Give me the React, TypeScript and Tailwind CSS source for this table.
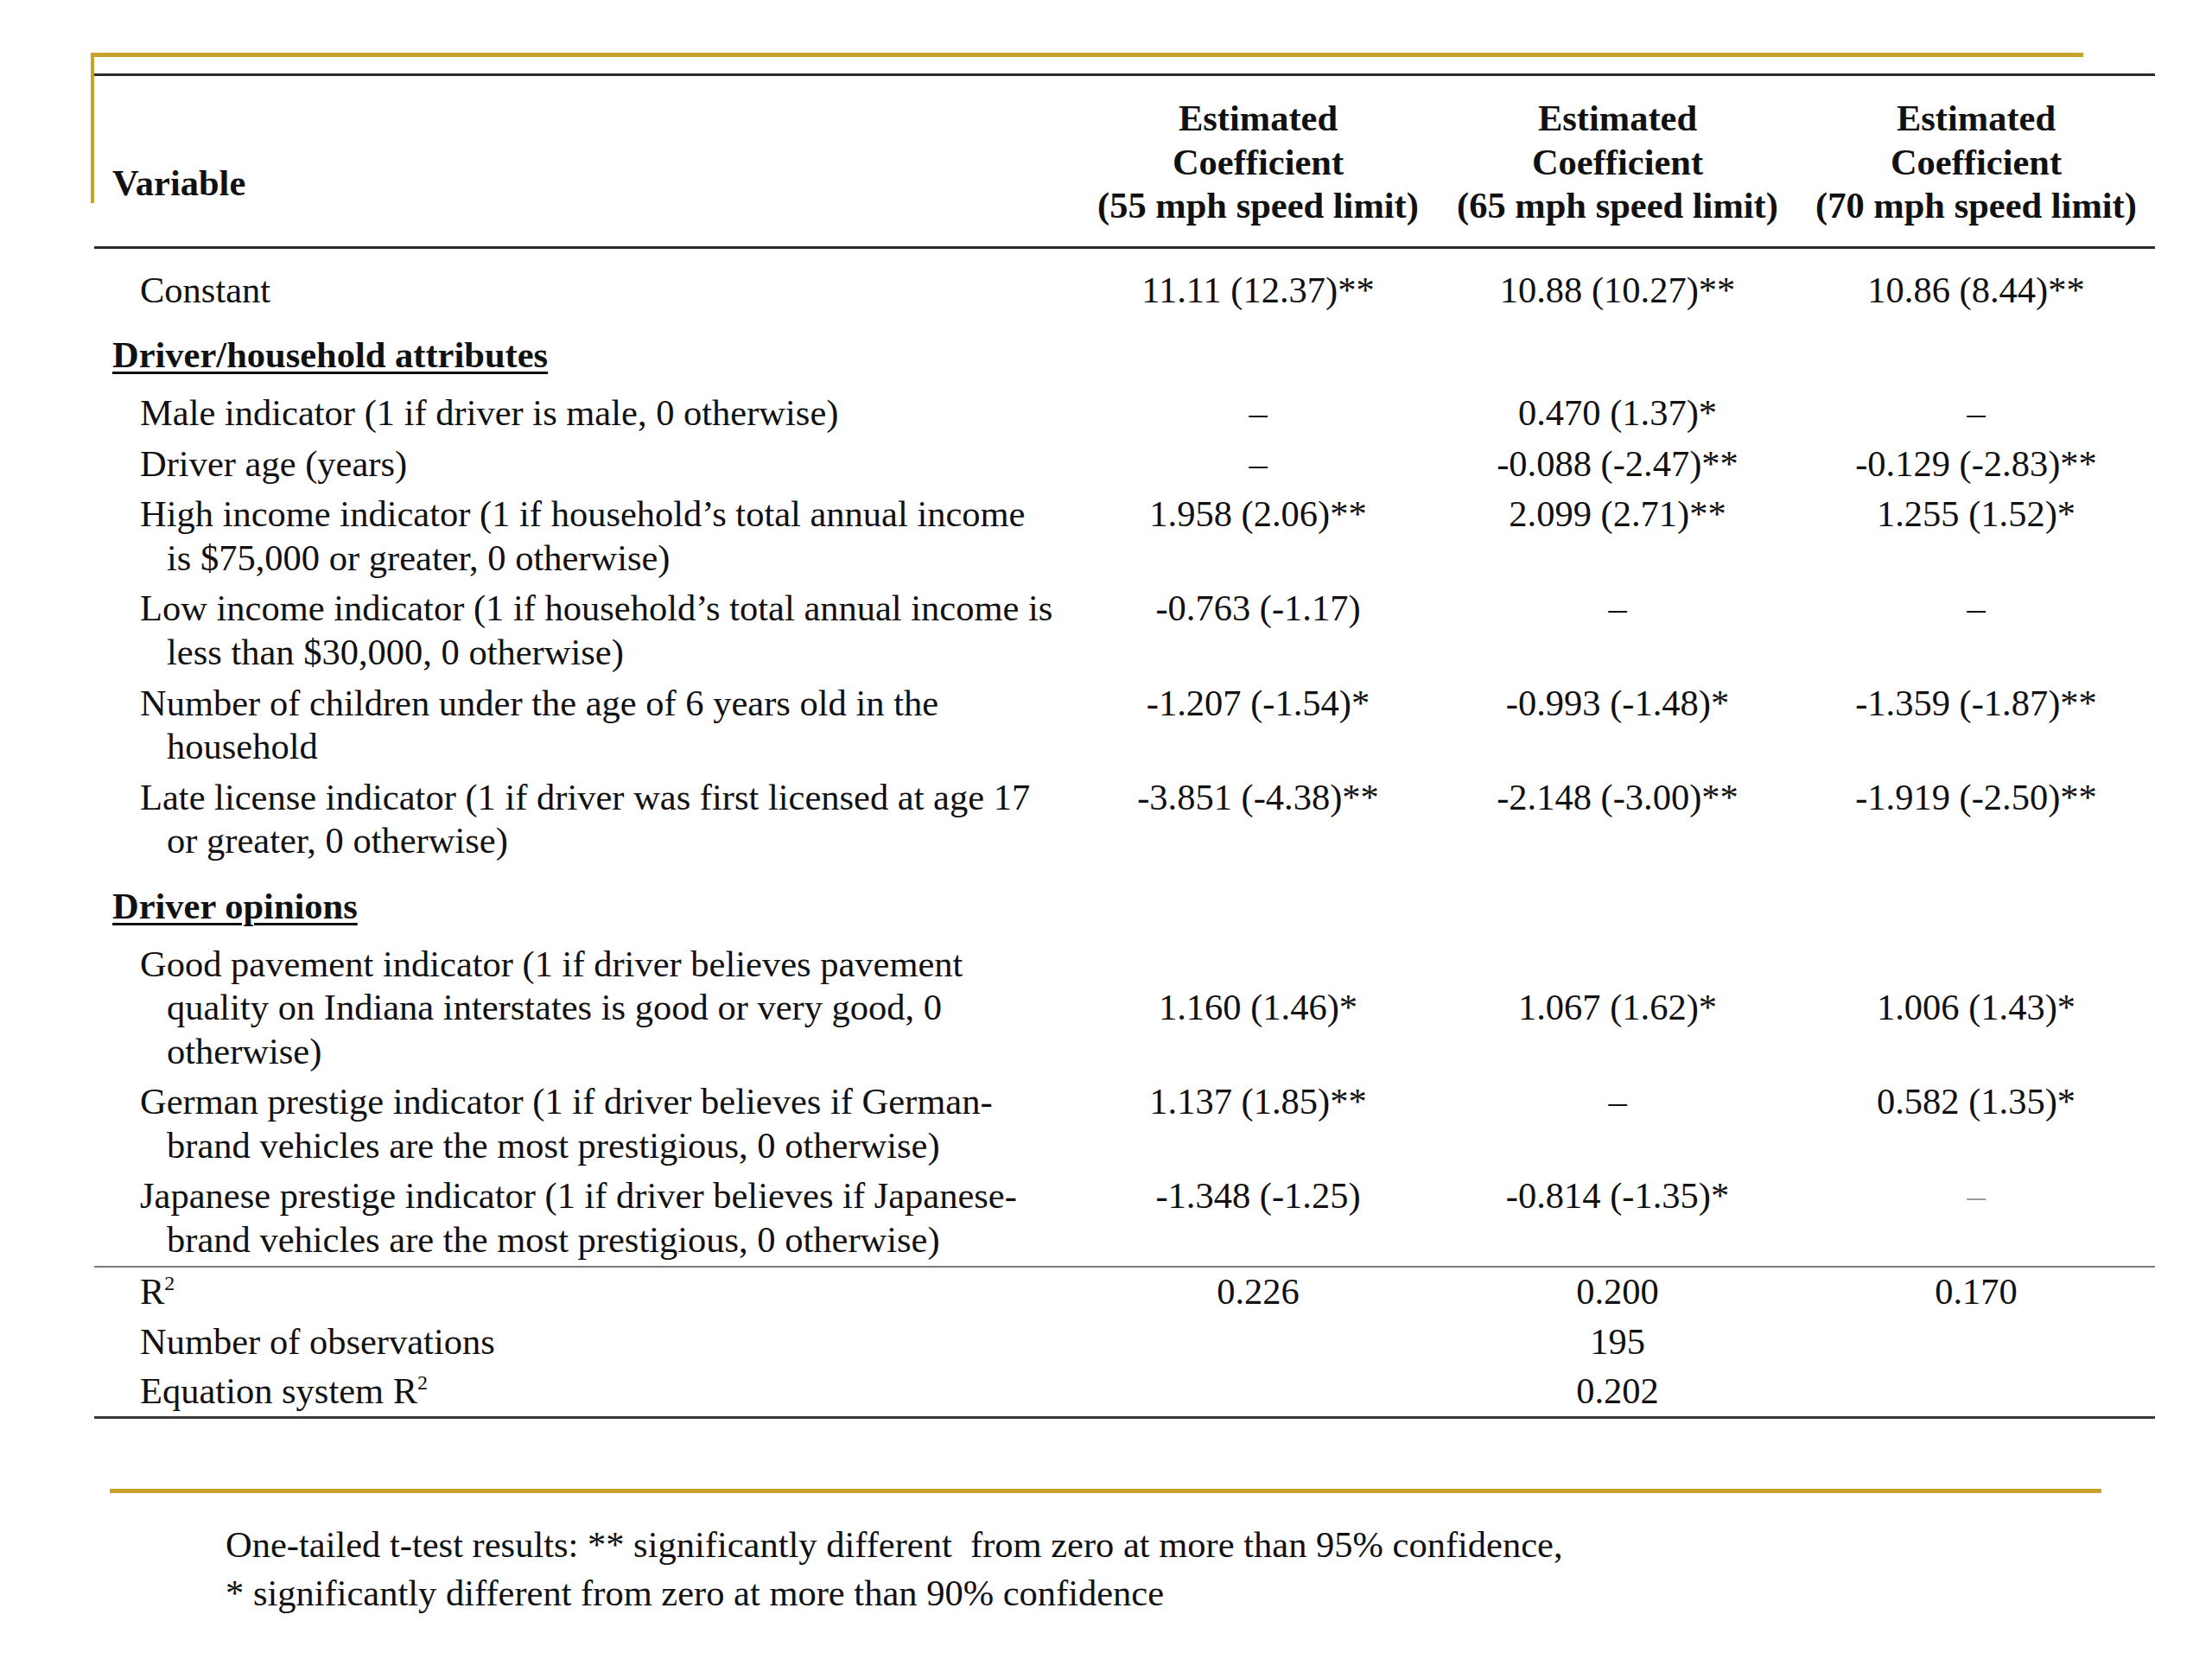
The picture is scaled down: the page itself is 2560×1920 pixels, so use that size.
import React from "react";

type Row =
  | { kind: "heading"; label: string }
  | { kind: "item"; label: React.ReactNode; v: string[]; center?: boolean; muted?: number[] };

const rows: Row[] = [
  { kind: "item", label: "Constant", v: ["11.11 (12.37)**", "10.88 (10.27)**", "10.86 (8.44)**"] },
  { kind: "heading", label: "Driver/household attributes" },
  { kind: "item", label: "Male indicator (1 if driver is male, 0 otherwise)", v: ["–", "0.470 (1.37)*", "–"] },
  { kind: "item", label: "Driver age (years)", v: ["–", "-0.088 (-2.47)**", "-0.129 (-2.83)**"] },
  {
    kind: "item",
    label: "High income indicator (1 if household’s total annual income is $75,000 or greater, 0 otherwise)",
    v: ["1.958 (2.06)**", "2.099 (2.71)**", "1.255 (1.52)*"],
  },
  {
    kind: "item",
    label: "Low income indicator (1 if household’s total annual income is less than $30,000, 0 otherwise)",
    v: ["-0.763 (-1.17)", "–", "–"],
  },
  {
    kind: "item",
    label: "Number of children under the age of 6 years old in the household",
    v: ["-1.207 (-1.54)*", "-0.993 (-1.48)*", "-1.359 (-1.87)**"],
  },
  {
    kind: "item",
    label: "Late license indicator (1 if driver was first licensed at age 17 or greater, 0 otherwise)",
    v: ["-3.851 (-4.38)**", "-2.148 (-3.00)**", "-1.919 (-2.50)**"],
  },
  { kind: "heading", label: "Driver opinions" },
  {
    kind: "item",
    label:
      "Good pavement indicator (1 if driver believes pavement quality on Indiana interstates is good or very good, 0 otherwise)",
    v: ["1.160 (1.46)*", "1.067 (1.62)*", "1.006 (1.43)*"],
    center: true,
  },
  {
    kind: "item",
    label: "German prestige indicator (1 if driver believes if German-brand vehicles are the most prestigious, 0 otherwise)",
    v: ["1.137 (1.85)**", "–", "0.582 (1.35)*"],
  },
  {
    kind: "item",
    label:
      "Japanese prestige indicator (1 if driver believes if Japanese-brand vehicles are the most prestigious, 0 otherwise)",
    v: ["-1.348 (-1.25)", "-0.814 (-1.35)*", "–"],
    muted: [2],
  },
];

const Sup = () => (
  <span className="relative -top-[16px] text-[24px] leading-none">2</span>
);

function DataRow({ r }: { r: Extract<Row, { kind: "item" }> }) {
  return (
    <div className="grid grid-cols-[1139px_416px_416px_414px] py-[4px] leading-[50.6px]">
      <div className="pl-[84px] pr-[24px] indent-[-31px]">{r.label}</div>
      {r.v.map((val, i) => (
        <div
          key={i}
          className={
            "text-center " +
            (r.center ? "self-center " : "self-start ") +
            (r.muted && r.muted.includes(i) ? "text-[#9a9a9a]" : "")
          }
        >
          {val}
        </div>
      ))}
    </div>
  );
}

function StatRow({ label, v }: { label: React.ReactNode; v: string[] }) {
  return (
    <div className="grid grid-cols-[1139px_416px_416px_414px] py-[3.5px] leading-[50.6px]">
      <div className="pl-[53px]">{label}</div>
      {v.map((val, i) => (
        <div key={i} className="text-center">
          {val}
        </div>
      ))}
    </div>
  );
}

export default function App() {
  return (
    <div className="w-[2560px] h-[1920px] bg-white text-[#111] font-['Liberation_Serif','Times_New_Roman',serif] text-[42.5px]">
      <div className="pt-[61px] pl-[105px]">
        {/* gold corner decoration */}
        <div className="w-[2306px] h-[5px] bg-[#c9a22b]" />
        <div className="flex">
          <div className="w-[4px] h-[169px] bg-[#c9a22b] shrink-0" />
          <div className="mt-[19px] w-[2385px]">
            {/* top rule */}
            <div className="h-[3px] bg-[#2b2b2b]" />
            {/* header */}
            <div className="grid grid-cols-[1139px_416px_416px_414px] pt-[24px] pb-[21px] leading-[50.6px] font-bold">
              <div className="pl-[21px] mt-[75px]">Variable</div>
              {["55", "65", "70"].map((s) => (
                <div key={s} className="text-center">
                  <div>Estimated</div>
                  <div>Coefficient</div>
                  <div>({s} mph speed limit)</div>
                </div>
              ))}
            </div>
            <div className="h-[3px] bg-[#2b2b2b]" />
            {/* body */}
            <div className="pt-[19px]">
              {rows.map((r, idx) =>
                r.kind === "heading" ? (
                  <div key={idx} className="pt-[21px] pb-[12px] pl-[21px] leading-[50.6px]">
                    <span className="font-bold underline decoration-[3px] underline-offset-[5px]">{r.label}</span>
                  </div>
                ) : (
                  <DataRow key={idx} r={r} />
                )
              )}
            </div>
            <div className="h-[2px] bg-[#7a7a7a]" />
            <StatRow
              label={
                <>
                  R<Sup />
                </>
              }
              v={["0.226", "0.200", "0.170"]}
            />
            <StatRow label="Number of observations" v={["", "195", ""]} />
            <StatRow
              label={
                <>
                  Equation system R<Sup />
                </>
              }
              v={["", "0.202", ""]}
            />
            <div className="h-[3px] bg-[#3a3a3a]" />
          </div>
        </div>
        {/* bottom gold line */}
        <div className="ml-[22px] mt-[81px] w-[2305px] h-[5px] bg-[#c9a22b]" />
        <div className="ml-[156px] mt-[32px] leading-[55.5px]">
          <div>One-tailed t-test results: ** significantly different{"\u00a0"} from zero at more than 95% confidence,</div>
          <div>* significantly different from zero at more than 90% confidence</div>
        </div>
      </div>
    </div>
  );
}
